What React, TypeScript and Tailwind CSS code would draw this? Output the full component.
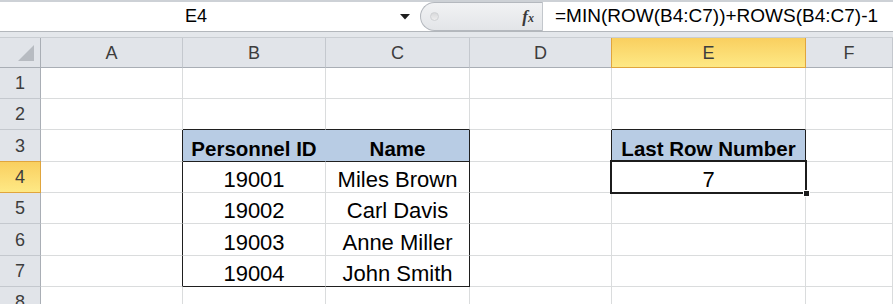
import React from "react";

type Cell = { text?: string; bold?: boolean; fill?: boolean; selected?: boolean };

const COLS = ["A", "B", "C", "D", "E", "F"];
const ROW_HEIGHTS = ["h-[31px]", "h-[31px]", "h-[32px]", "h-[31px]", "h-[31px]", "h-[32px]", "h-[31px]", "h-[31px]"];

const data: Record<string, Cell> = {
  B3: { text: "Personnel ID", bold: true, fill: true },
  C3: { text: "Name", bold: true, fill: true },
  E3: { text: "Last Row Number", bold: true, fill: true },
  B4: { text: "19001" },
  C4: { text: "Miles Brown" },
  E4: { text: "7", selected: true },
  B5: { text: "19002" },
  C5: { text: "Carl Davis" },
  B6: { text: "19003" },
  C6: { text: "Anne Miller" },
  B7: { text: "19004" },
  C7: { text: "John Smith" },
};

function rightBorder(r: number, c: string) {
  if (c === "B" && r === 3) return "border-r-[#b8cce4]";
  if ((c === "A" || c === "C") && r >= 3 && r <= 7) return "border-r-[#1f1f1f]";
  if ((c === "D" || c === "E") && (r === 3 || r === 4)) return "border-r-[#1f1f1f]";
  return "border-r-[#dadcdd]";
}

function bottomBorder(r: number, c: string) {
  if ((c === "B" || c === "C") && (r === 2 || r === 3 || r === 7)) return "border-b-[#1f1f1f]";
  if (c === "E" && r >= 2 && r <= 4) return "border-b-[#1f1f1f]";
  return "border-b-[#dadcdd]";
}

function FormulaBar() {
  return (
    <div className="flex flex-col">
      <div className="h-[2px] bg-[#cdd1d6]" />
      <div className="h-[29px] flex bg-white">
        <div className="w-[392px] flex items-center justify-center text-[18px] text-black">E4</div>
        <div className="w-[28px] flex items-center justify-start pl-[8px]">
          <svg width="10" height="6" viewBox="0 0 10 6">
            <path d="M0 0 L10 0 L5 5.5 Z" fill="#1e1e1e" />
          </svg>
        </div>
        <div className="w-[122px] relative flex items-center justify-end pr-[8px] rounded-l-[16px] border-l border-y border-[#b4b8be] bg-gradient-to-b from-[#f1f2f4] to-[#e3e5e8]">
          <div className="absolute left-[9px] top-[9px] w-[9px] h-[9px] rounded-full bg-gradient-to-b from-[#d8d9db] to-[#eeeeef] border border-[#cfd1d4]" />
          <span className="font-['Liberation_Serif'] italic font-bold text-[17px] text-[#3a3a3a] leading-none">
            f<span className="text-[12px]">x</span>
          </span>
        </div>
        <div className="w-px bg-[#c3c7cc]" />
        <div className="flex-1 flex items-center pl-[12px] text-[19px] text-black whitespace-nowrap">
          =MIN(ROW(B4:C7))+ROWS(B4:C7)-1
        </div>
      </div>
      <div className="h-px bg-[#b3b7bc]" />
      <div className="h-[6px] bg-[#e4e7eb] border-b border-[#c9cdd2]" />
    </div>
  );
}

function HeaderRow() {
  return (
    <div className="grid grid-cols-[41px_142px_143px_144px_142px_194px_1fr] grid-rows-[30px] h-[30px]">
      <div className="relative bg-[#e1e4e9] border-r border-b border-[#a9aeb5]">
        <svg className="absolute left-[17px] top-[6px]" width="18" height="18" viewBox="0 0 18 18">
          <path d="M17 1 L17 17 L1 17 Z" fill="#b7bbc1" />
        </svg>
      </div>
      {COLS.map((c) =>
        c === "E" ? (
          <div
            key={c}
            className="flex items-center justify-center text-[18px] leading-none text-[#3d3d3d] bg-gradient-to-b from-[#f9cf5f] to-[#fee985] border-x border-b border-[#e0a53d] -ml-px"
          >
            {c}
          </div>
        ) : (
          <div
            key={c}
            className="flex items-center justify-center text-[18px] leading-none text-[#3d3d3d] bg-[#e1e4e9] border-r border-b border-r-[#c4c8ce] border-b-[#a9aeb5]"
          >
            {c}
          </div>
        )
      )}
    </div>
  );
}

function SheetRow({ r }: { r: number }) {
  const selectedRow = r === 4;
  return (
    <div className={`grid grid-cols-[41px_142px_143px_144px_142px_194px_1fr] grid-rows-[100%] ${ROW_HEIGHTS[r - 1]}`}>
      {selectedRow ? (
        <div className="flex items-center justify-center text-[18px] leading-none text-[#3d3d3d] bg-gradient-to-b from-[#f9cf5f] to-[#fee985] border-r border-y border-[#e0a53d] -mt-px">
          {r}
        </div>
      ) : (
        <div className="flex items-center justify-center text-[18px] leading-none text-[#3d3d3d] bg-[#e1e4e9] border-r border-b border-r-[#a9aeb5] border-b-[#c4c8ce]">
          {r}
        </div>
      )}
      {COLS.map((c) => {
        const cell = data[`${c}${r}`];
        return (
          <div
            key={c}
            className={`relative flex items-end justify-center overflow-visible border-r border-b ${rightBorder(r, c)} ${bottomBorder(r, c)} ${
              cell?.fill ? "bg-[#b8cce4]" : "bg-white"
            } ${cell?.bold ? "font-bold text-[20.5px] leading-[24px]" : "text-[22px] leading-[25px]"} text-black whitespace-nowrap`}
          >
            {cell?.text}
            {cell?.selected && (
              <div className="absolute left-[-2px] top-[-2px] right-[-2px] bottom-[-2px] border-2 border-[#1c1c1c] z-10">
                <div className="absolute right-[-5px] bottom-[-5px] w-[7px] h-[7px] bg-[#1c1c1c] border border-white" />
              </div>
            )}
          </div>
        );
      })}
    </div>
  );
}

export default function App() {
  return (
    <div className="w-[893px] h-[304px] overflow-hidden bg-white font-['Liberation_Sans',Arial,sans-serif]">
      <FormulaBar />
      <HeaderRow />
      {[1, 2, 3, 4, 5, 6, 7, 8].map((r) => (
        <SheetRow key={r} r={r} />
      ))}
    </div>
  );
}
